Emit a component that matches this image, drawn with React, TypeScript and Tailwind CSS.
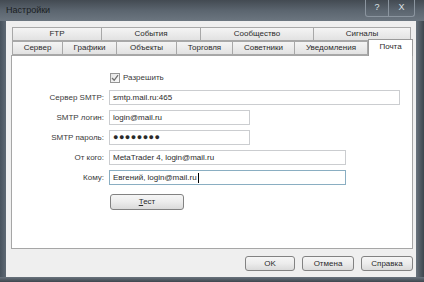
import React from "react";

const font = { fontFamily: '"Liberation Sans", Arial, sans-serif' };

function Tab({ w, label, selected }: { w: string; label: string; selected?: boolean }) {
  if (selected) {
    return (
      <div
        className={`${w} relative z-10 h-[17px] -mb-[1px] flex items-start justify-center pt-[3px] bg-white border border-b-0 border-[#9a9a9a] text-[8px] text-[#2a2a2a] leading-none`}
      >
        {label}
      </div>
    );
  }
  return (
    <div
      className={`${w} h-[14px] flex items-center justify-center bg-gradient-to-b from-[#f4f4f4] to-[#e2e2e2] border border-[#a8a8a8] -ml-[1px] first:ml-0 text-[8px] text-[#2a2a2a] leading-none`}
    >
      {label}
    </div>
  );
}

function Btn({ w, children }: { w: string; children: React.ReactNode }) {
  return (
    <div
      className={`${w} h-[15px] flex items-center justify-center rounded-[3px] border border-[#828282] bg-gradient-to-b from-[#f6f6f6] via-[#ececec] to-[#dadada] text-[8px] text-[#2a2a2a] leading-none`}
    >
      {children}
    </div>
  );
}

function Row({ label, children }: { label: string; children: React.ReactNode }) {
  return (
    <div className="flex items-center h-[15px]">
      <div className="w-[93px] text-right text-[8px] text-[#3a3a3a] leading-none pr-[1px]">{label}</div>
      <div className="ml-[4px]">{children}</div>
    </div>
  );
}

function Input({
  w,
  value,
  focused,
  caret,
  password,
}: {
  w: string;
  value: string;
  focused?: boolean;
  caret?: boolean;
  password?: boolean;
}) {
  return (
    <div
      className={`${w} h-[15px] flex items-center px-[3px] bg-white border ${focused ? "border-[#8aaec2]" : "border-[#cbcdd0]"} text-[8px] text-[#2a2a2a] leading-none`}
    >
      <span className={password ? "text-[9px] tracking-[0.5px]" : ""}>{value}</span>
      {caret && <span className="inline-block w-[1px] h-[10px] bg-black ml-[1px]" />}
    </div>
  );
}

export default function App() {
  return (
    <div style={font} className="w-[424px] h-[282px] flex flex-col bg-[#56616c] overflow-hidden">
      {/* Title bar */}
      <div className="h-[21px] flex items-start bg-gradient-to-b from-[#434a52] via-[#5b656f] to-[#6c7680]">
        <div className="pl-[6px] pt-[6px] text-[9px] text-[#1a1d21] leading-none">Настройки</div>
        <div className="ml-auto mr-[9px] flex h-[17px]">
          <div className="w-[24px] h-[17px] flex items-center justify-center border border-t-0 border-[#8b959f] rounded-bl-[3px] text-[9px] text-[#dfe3e6]">?</div>
          <div className="w-[26px] h-[17px] flex items-center justify-center border border-t-0 border-l-0 border-[#8b959f] rounded-br-[3px] text-[9px] text-[#dfe3e6]">X</div>
        </div>
      </div>
      <div className="flex flex-1">
        <div className="w-[6px] bg-gradient-to-r from-[#47525d] to-[#5e6974]" />
        {/* client */}
        <div className="flex-1 bg-[#efefef] flex flex-col pt-[6px] pb-[6px]">
          {/* tab row 1 */}
          <div className="flex h-[14px] pl-[6px]">
            <Tab w="w-[90px]" label="FTP" />
            <Tab w="w-[100px]" label="События" />
            <Tab w="w-[114px]" label="Сообщество" />
            <Tab w="w-[98px]" label="Сигналы" />
          </div>
          {/* tab row 2 */}
          <div className="flex items-end h-[14px] pl-[6px]">
            <Tab w="w-[51px]" label="Сервер" />
            <Tab w="w-[55px]" label="Графики" />
            <Tab w="w-[61px]" label="Объекты" />
            <Tab w="w-[57px]" label="Торговля" />
            <Tab w="w-[63px]" label="Советники" />
            <Tab w="w-[74px]" label="Уведомления" />
            <Tab w="w-[45px]" label="Почта" selected />
          </div>
          {/* panel */}
          <div className="ml-[5px] mr-[3px] h-[194px] bg-white border border-[#a6a6a6] flex flex-col pt-[16px]">
            <div className="flex items-center h-[11px] ml-[98px]">
              <div className="w-[10px] h-[10px] border border-[#969696] bg-gradient-to-br from-[#e6e6e6] to-[#fafafa] flex items-center justify-center">
                <svg width="8" height="8" viewBox="0 0 8 8">
                  <path d="M1 4 L3.2 6.3 L7 1.2" stroke="#707070" strokeWidth="1.3" fill="none" />
                </svg>
              </div>
              <span className="ml-[3px] text-[8px] text-[#3a3a3a] leading-none">Разрешить</span>
            </div>
            <div className="flex flex-col gap-[5px] mt-[7px]">
              <Row label="Сервер SMTP:">
                <Input w="w-[291px]" value="smtp.mail.ru:465" />
              </Row>
              <Row label="SMTP логин:">
                <Input w="w-[141px]" value="login@mail.ru" />
              </Row>
              <Row label="SMTP пароль:">
                <Input w="w-[141px]" value="●●●●●●●●" password />
              </Row>
              <Row label="От кого:">
                <Input w="w-[237px]" value="MetaTrader 4, login@mail.ru" />
              </Row>
              <Row label="Кому:">
                <Input w="w-[237px]" value="Евгений, login@mail.ru" focused caret />
              </Row>
            </div>
            <div className="ml-[98px] mt-[9px]">
              <Btn w="w-[74px] h-[16px]">
                <span>
                  <span className="underline">Т</span>ест
                </span>
              </Btn>
            </div>
          </div>
          {/* bottom buttons */}
          <div className="flex justify-end gap-[7px] mt-[7px] mr-[3px]">
            <Btn w="w-[50px]">OK</Btn>
            <Btn w="w-[52px]">Отмена</Btn>
            <Btn w="w-[52px]">Справка</Btn>
          </div>
        </div>
        <div className="w-[8px] bg-gradient-to-r from-[#6a747e] to-[#3d454d]" />
      </div>
      <div className="h-[5px] bg-gradient-to-b from-[#6a747e] to-[#3e464e]" />
    </div>
  );
}
